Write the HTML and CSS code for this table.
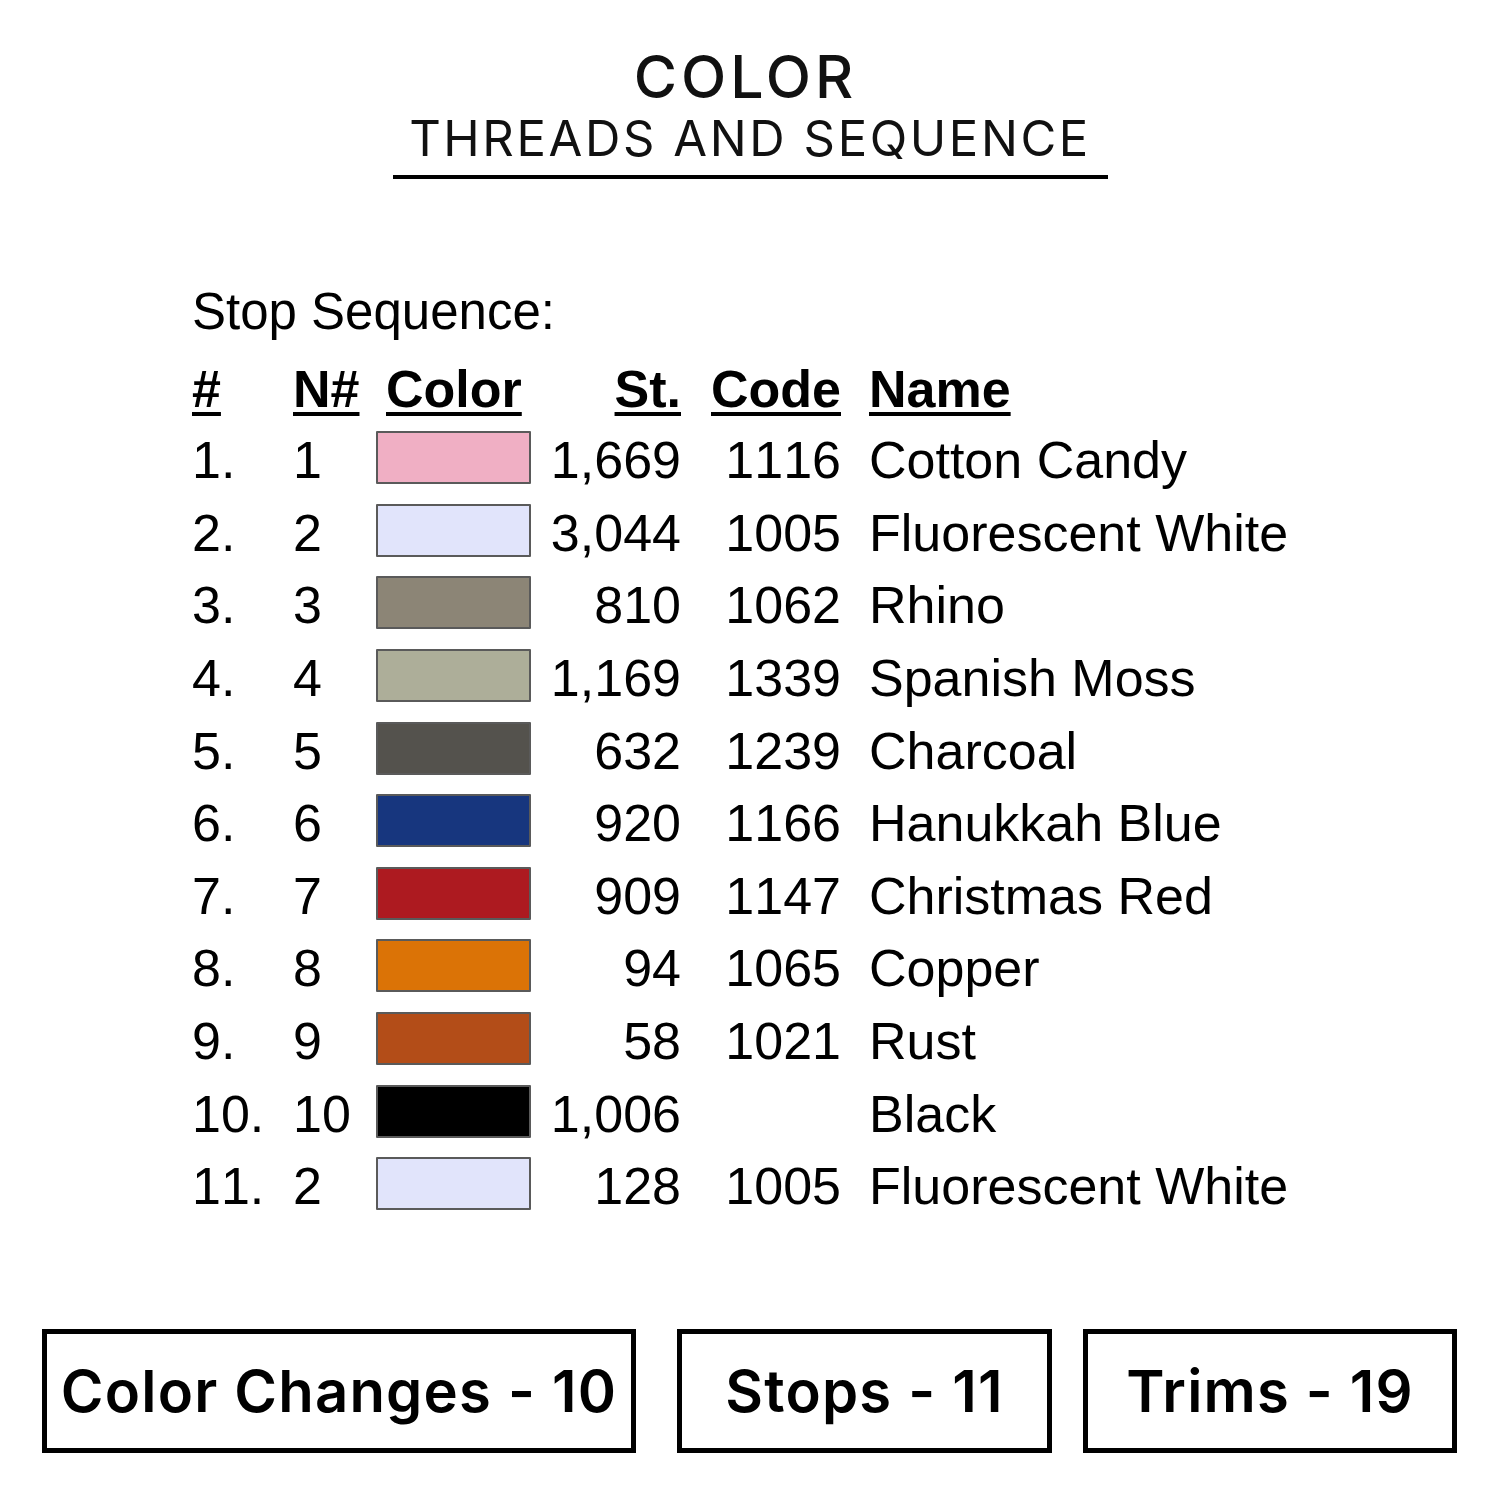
FILE: index.html
```html
<!DOCTYPE html>
<html>
<head>
<meta charset="utf-8">
<link rel="stylesheet" href="styles.css">
</head>
<body>
<div class="page">
  <header class="title">
    <div class="title-main">COLOR</div>
    <div class="title-sub">THREADS AND SEQUENCE</div>
  </header>

  <section class="sequence">
    <div class="seq-label">Stop Sequence:</div>
    <div class="grid">
      <div class="th c-num">#</div>
      <div class="th c-n">N#</div>
      <div class="th c-sw">Color</div>
      <div class="th c-st">St.</div>
      <div class="th c-code">Code</div>
      <div class="th c-name">Name</div>

      <div class="c-num">1.</div><div class="c-n">1</div><div class="c-sw"><span class="sw" style="background:#f0afc4"></span></div><div class="c-st">1,669</div><div class="c-code">1116</div><div class="c-name">Cotton Candy</div>
      <div class="c-num">2.</div><div class="c-n">2</div><div class="c-sw"><span class="sw" style="background:#e1e4fb"></span></div><div class="c-st">3,044</div><div class="c-code">1005</div><div class="c-name">Fluorescent White</div>
      <div class="c-num">3.</div><div class="c-n">3</div><div class="c-sw"><span class="sw" style="background:#8c8576"></span></div><div class="c-st">810</div><div class="c-code">1062</div><div class="c-name">Rhino</div>
      <div class="c-num">4.</div><div class="c-n">4</div><div class="c-sw"><span class="sw" style="background:#adae99"></span></div><div class="c-st">1,169</div><div class="c-code">1339</div><div class="c-name">Spanish Moss</div>
      <div class="c-num">5.</div><div class="c-n">5</div><div class="c-sw"><span class="sw" style="background:#54524d"></span></div><div class="c-st">632</div><div class="c-code">1239</div><div class="c-name">Charcoal</div>
      <div class="c-num">6.</div><div class="c-n">6</div><div class="c-sw"><span class="sw" style="background:#17367e"></span></div><div class="c-st">920</div><div class="c-code">1166</div><div class="c-name">Hanukkah Blue</div>
      <div class="c-num">7.</div><div class="c-n">7</div><div class="c-sw"><span class="sw" style="background:#ad1a20"></span></div><div class="c-st">909</div><div class="c-code">1147</div><div class="c-name">Christmas Red</div>
      <div class="c-num">8.</div><div class="c-n">8</div><div class="c-sw"><span class="sw" style="background:#db7306"></span></div><div class="c-st">94</div><div class="c-code">1065</div><div class="c-name">Copper</div>
      <div class="c-num">9.</div><div class="c-n">9</div><div class="c-sw"><span class="sw" style="background:#b34d18"></span></div><div class="c-st">58</div><div class="c-code">1021</div><div class="c-name">Rust</div>
      <div class="c-num">10.</div><div class="c-n">10</div><div class="c-sw"><span class="sw" style="background:#000000"></span></div><div class="c-st">1,006</div><div class="c-code"></div><div class="c-name">Black</div>
      <div class="c-num">11.</div><div class="c-n">2</div><div class="c-sw"><span class="sw" style="background:#e1e4fb"></span></div><div class="c-st">128</div><div class="c-code">1005</div><div class="c-name">Fluorescent White</div>
    </div>
  </section>

  <footer class="stats">
    <div class="stat stat-wide">Color Changes - 10</div>
    <div class="stat stat-mid">Stops - 11</div>
    <div class="stat stat-last">Trims - 19</div>
  </footer>
</div>
</body>
</html>
```

FILE: styles.css
```css
html, body {
  margin: 0;
  padding: 0;
  background: #ffffff;
}

.page {
  width: 1500px;
  height: 1500px;
  position: relative;
  color: #000;
}

.title {
  display: flex;
  flex-direction: column;
  align-items: center;
  padding-top: 44px;
}

.title-main {
  font-family: "Inter", "Lato", sans-serif;
  font-weight: 500;
  font-size: 59px;
  line-height: 66px;
  letter-spacing: 4px;
  margin-right: 9px;
  color: #111;
}

.title-sub {
  font-family: "Inter", "Lato", sans-serif;
  font-weight: 400;
  font-size: 49px;
  line-height: 58px;
  letter-spacing: 2.6px;
  width: 715px;
  text-align: center;
  border-bottom: 4px solid #000;
  padding-bottom: 7px;
  color: #111;
}

.sequence {
  margin-top: 103px;
  padding-left: 192px;
  font-family: "Liberation Sans", Arial, sans-serif;
  font-kerning: none;
  color: #000;
}

.seq-label {
  font-size: 51px;
  line-height: 60px;
}

.grid {
  margin-top: 12px;
  display: grid;
  grid-template-columns: 101px 83px 155px 150px 160px auto;
  grid-template-rows: 70px;
  grid-auto-rows: 72.6px;
  align-items: center;
  font-size: 52px;
  line-height: 60px;
}

.th {
  font-weight: bold;
  text-decoration: underline;
  text-decoration-thickness: 4px;
  text-underline-offset: 5px;
}

.c-sw {
  display: flex;
  align-items: center;
}

.th.c-sw {
  padding-left: 10px;
}

.sw {
  display: block;
  width: 152px;
  height: 49px;
  border: 2px solid #5a5a5a;
  border-radius: 1px;
  margin-top: -5px;
}

.c-st, .c-code {
  text-align: right;
}

.c-name {
  padding-left: 28px;
  white-space: nowrap;
}

.stats {
  position: absolute;
  left: 42px;
  top: 1329px;
  display: flex;
}

.stat {
  box-sizing: border-box;
  height: 124px;
  border: 5px solid #000;
  display: flex;
  align-items: center;
  justify-content: center;
  font-family: "Inter", "Lato", sans-serif;
  font-weight: 600;
  font-size: 58px;
  letter-spacing: 1.2px;
  color: #000;
  white-space: nowrap;
}

.stat-wide {
  width: 594px;
}

.stat-mid {
  width: 375px;
  margin-left: 41px;
}

.stat-last {
  width: 374px;
  margin-left: 31px;
}
```
